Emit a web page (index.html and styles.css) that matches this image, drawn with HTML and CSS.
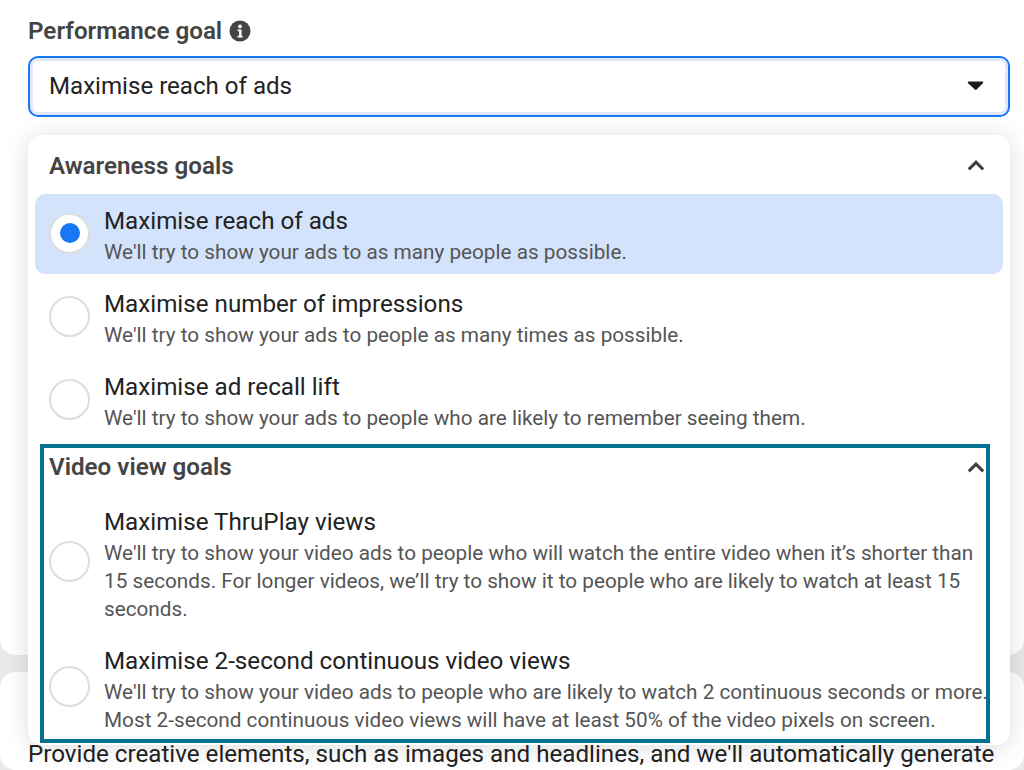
FILE: index.html
```html
<!DOCTYPE html>
<html lang="en">
<head>
    <meta charset="UTF-8">
    <title>Performance goal</title>
    <link rel="stylesheet" href="styles.css">
</head>
<body>
    <div class="card top-card">
        <div class="field-label">
            <span>Performance goal</span>
            <svg class="info" viewBox="0 0 22 22"><circle cx="11" cy="11" r="10.5" fill="#444"/><circle cx="11" cy="6.4" r="1.9" fill="#fff"/><path d="M8.6 9.6h3.9v6.2h1.2v1.7H8.6v-1.7h1.5v-4.5H8.6z" fill="#fff"/></svg>
        </div>
        <div class="select">
            <span>Maximise reach of ads</span>
            <svg class="caret" viewBox="0 0 18 11"><path d="M1.6 0.5h14.8c1 0 1.5 1.2 0.8 1.9l-7 7c-0.5 0.6-1.4 0.6-1.9 0l-7.5-7c-0.7-0.7-0.2-1.9 0.8-1.9z" fill="#1c1c1c"/></svg>
        </div>
    </div>
    <div class="card bottom-card">
        <p class="creative-text">Provide creative elements, such as images and headlines, and we'll automatically generate</p>
    </div>

    <div class="menu">
        <div class="group-head">
            <span>Awareness goals</span>
            <svg class="chevron" viewBox="0 0 18 11"><path d="M1.8 9.4L9 2.2l7.2 7.2" fill="none" stroke="#3f3f3f" stroke-width="3"/></svg>
        </div>
        <div class="option selected">
            <div class="radio"></div>
            <div class="option-text">
                <div class="title">Maximise reach of ads</div>
                <div class="desc">We'll try to show your ads to as many people as possible.</div>
            </div>
        </div>
        <div class="option">
            <div class="radio"></div>
            <div class="option-text">
                <div class="title">Maximise number of impressions</div>
                <div class="desc">We'll try to show your ads to people as many times as possible.</div>
            </div>
        </div>
        <div class="option">
            <div class="radio"></div>
            <div class="option-text">
                <div class="title">Maximise ad recall lift</div>
                <div class="desc">We'll try to show your ads to people who are likely to remember seeing them.</div>
            </div>
        </div>
        <div class="group-head video-head">
            <span>Video view goals</span>
            <svg class="chevron" viewBox="0 0 18 11"><path d="M1.8 9.4L9 2.2l7.2 7.2" fill="none" stroke="#3f3f3f" stroke-width="3"/></svg>
        </div>
        <div class="option tall">
            <div class="radio"></div>
            <div class="option-text">
                <div class="title">Maximise ThruPlay views</div>
                <div class="desc">We'll try to show your video ads to people who will watch the entire video when it’s shorter than<br>15 seconds. For longer videos, we’ll try to show it to people who are likely to watch at least 15<br>seconds.</div>
            </div>
        </div>
        <div class="option tall">
            <div class="radio"></div>
            <div class="option-text">
                <div class="title">Maximise 2-second continuous video views</div>
                <div class="desc">We'll try to show your video ads to people who are likely to watch 2 continuous seconds or more.<br>Most 2-second continuous video views will have at least 50% of the video pixels on screen.</div>
            </div>
        </div>
        <div class="highlight"></div>
    </div>
</body>
</html>
```

FILE: styles.css
```css
body{
    margin: 0;
    height: 770px;
    overflow: hidden;
    position: relative;
    background: #e9e9ea;
    font-family: Roboto, "Liberation Sans", sans-serif;
    color: #222;
}

.card{
    background: #fff;
    border-radius: 16px;
}

.top-card{
    height: 655px;
    padding: 17px 14px 0 28px;
    box-sizing: border-box;
    border-top-left-radius: 0;
    border-top-right-radius: 0;
}

.bottom-card{
    margin-top: 17px;
    height: 98px;
    padding: 67px 14px 0 28px;
    box-sizing: border-box;
}

.field-label{
    display: flex;
    align-items: center;
    gap: 7px;
    font-size: 24.2px;
    line-height: 28px;
    font-weight: 600;
    color: #444;
}

.info{
    width: 22px;
    height: 22px;
}

.select{
    margin-top: 11px;
    height: 61px;
    box-sizing: border-box;
    border: 2px solid #1877f2;
    box-shadow: inset 0 0 0 3px #dfe9fb;
    border-radius: 10px;
    display: flex;
    align-items: center;
    justify-content: space-between;
    padding: 0 24px 2px 19px;
    font-size: 24.1px;
}

.caret{
    width: 17px;
    height: 10px;
}

.creative-text{
    margin: 0;
    font-size: 24.18px;
    line-height: 30px;
    white-space: nowrap;
}

.menu{
    position: absolute;
    left: 28px;
    top: 135px;
    width: 982px;
    height: 610px;
    background: #fff;
    border-radius: 14px;
    box-shadow: 0 2px 24px rgba(0,0,0,0.14);
    padding: 0 7px;
    box-sizing: border-box;
}

.group-head{
    height: 59px;
    display: flex;
    align-items: center;
    justify-content: space-between;
    padding: 2px 18px 0 14px;
    box-sizing: border-box;
    font-size: 24.2px;
    font-weight: 600;
    color: #444;
}

.video-head{
    height: 46px;
    margin-bottom: 15px;
}

.chevron{
    width: 18px;
    height: 11px;
}

.option{
    display: flex;
    align-items: center;
    gap: 14px;
    height: 80px;
    margin-bottom: 3px;
    padding-left: 14px;
    border-radius: 10px;
}

.option.selected{
    background: #d3e3fc;
}

.option.tall{
    height: auto;
    margin-bottom: 20px;
}

.radio{
    width: 41px;
    height: 41px;
    margin-top: -2px;
    box-sizing: border-box;
    border: 2px solid #ddd;
    border-radius: 50%;
    background: #fff;
    flex: none;
    position: relative;
}

.tall .radio{
    margin-top: -4px;
}

.selected .radio::after{
    content: "";
    position: absolute;
    left: 8.5px;
    top: 8.5px;
    width: 20px;
    height: 20px;
    border-radius: 50%;
    background: #1877f2;
}

.option-text{
    padding-top: 3px;
}

.title{
    font-size: 24.2px;
    line-height: 30px;
    margin-bottom: 2px;
    color: #222;
}

.desc{
    font-size: 20.74px;
    line-height: 28px;
    color: #555;
    white-space: nowrap;
}

/* annotation drawn on top of the screenshot */
.highlight{
    position: absolute;
    left: 12px;
    top: 309px;
    width: 950px;
    height: 299px;
    box-sizing: border-box;
    border: 4px solid #04718f;
    pointer-events: none;
}
```
